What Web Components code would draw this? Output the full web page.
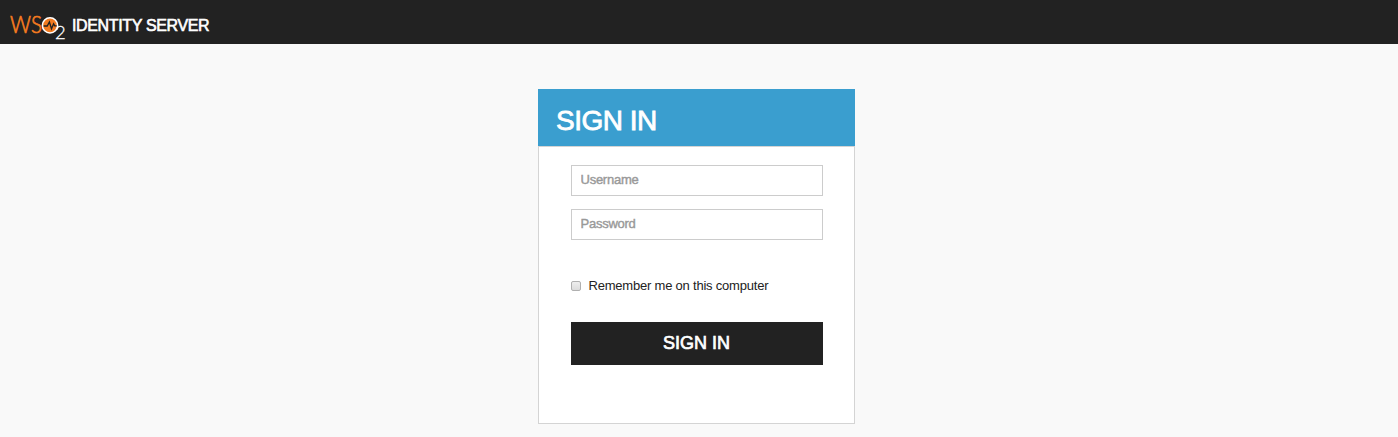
<!DOCTYPE html>
<html lang="en">
<head>
<meta charset="utf-8">
<title>WSO2 Identity Server</title>
<style>
html,body{margin:0;height:100%;overflow:hidden}
body{background:#f9f9f9;font-family:"Liberation Sans",Arial,sans-serif;color:#222}
</style>
</head>
<body>
<app-header>IDENTITY SERVER</app-header>
<sign-in-card heading="SIGN IN">
  <text-field placeholder="Username"></text-field>
  <text-field placeholder="Password" type="password"></text-field>
  <check-option>Remember me on this computer</check-option>
  <submit-button>SIGN IN</submit-button>
</sign-in-card>
<script>
function define(name, html, setup) {
  customElements.define(name, class extends HTMLElement {
    constructor() {
      super();
      this.attachShadow({mode: 'open'}).innerHTML = html;
    }
    connectedCallback() { if (setup) setup(this, this.shadowRoot); }
  });
}
define('brand-logo', `<style>
:host{display:block;width:56px;height:28px}
svg{display:block;overflow:visible}
text{font-family:Lato,sans-serif;font-weight:300}
</style>
<svg width="56" height="28" viewBox="0 0 56 28">
<text x="0" y="19.3" font-size="23.5" fill="#f47b20" stroke="#f47b20" stroke-width=".7" textLength="32" lengthAdjust="spacingAndGlyphs">WS</text>
<circle cx="40" cy="11.4" r="7.6" fill="#f47b20" stroke="#fff" stroke-width="1.6"/>
<path d="M33.6 12h3.6l2.2-4 2.1 6.8 2.1-5 1.1 2h2" fill="none" stroke="#222" stroke-width="1.3"/>
<text x="45" y="24.7" font-size="18.5" fill="#fff" stroke="#fff" stroke-width=".3">2</text>
</svg>`);
define('app-header', `<style>
:host{display:flex;box-sizing:border-box;height:44px;padding:14px 0 0 10px;background:#222;color:#fff}
span{margin:3px 0 0 6px;font-size:16px;line-height:18px;letter-spacing:-.35px;-webkit-text-stroke:.6px #fff;white-space:nowrap}
</style><brand-logo></brand-logo><span><slot></slot></span>`);
define('sign-in-card', `<style>
:host{display:block;width:317px;margin:45px 0 0 538px}
h2{box-sizing:border-box;height:57px;margin:0;padding:16px 18px 0;background:#3a9ecf;color:#fff;font-size:28px;line-height:32px;font-weight:400;letter-spacing:-.5px;-webkit-text-stroke:.8px #fff}
div{box-sizing:border-box;height:278px;border:1px solid #d4d4d4;background:#fff;padding:18px 31px 0 32px;display:flex;flex-direction:column}
</style><h2></h2><div><slot></slot></div>`, (el, r) => { r.querySelector('h2').textContent = el.getAttribute('heading'); });
define('text-field', `<style>
:host{display:block;margin-bottom:13px}
input{display:block;box-sizing:border-box;width:100%;height:31px;border:1px solid #ccc;border-radius:0;outline:0;margin:0;padding:0 8.5px 2px;background:#fff;font:13px "Liberation Sans",Arial,sans-serif;letter-spacing:-.25px}
input::placeholder{color:#999;opacity:1;-webkit-text-stroke:.4px #999}
</style><input>`, (el, r) => {
  const i = r.querySelector('input');
  i.placeholder = el.getAttribute('placeholder');
  i.type = el.getAttribute('type') || 'text';
});
define('check-option', `<style>
:host{display:block;margin-top:25px}
label{display:flex;align-items:center;height:16px;font-size:13px;line-height:16px;letter-spacing:-.21px;white-space:nowrap}
input{appearance:none;box-sizing:border-box;width:10px;height:10px;margin:-1px 7.5px 0 0;border:1px solid #b0b0b0;border-radius:2px;background:linear-gradient(#eee,#dcdcdc)}
</style><label><input type="checkbox"><span><slot></slot></span></label>`);
define('submit-button', `<style>
:host{display:block;margin-top:28px}
button{display:block;width:100%;height:43px;border:0;margin:0;padding:0 1px 0 0;background:#222;color:#fff;font:18px "Liberation Sans",Arial,sans-serif;-webkit-text-stroke:.7px #fff}
</style><button type="submit"><slot></slot></button>`);
</script>
</body>
</html>
